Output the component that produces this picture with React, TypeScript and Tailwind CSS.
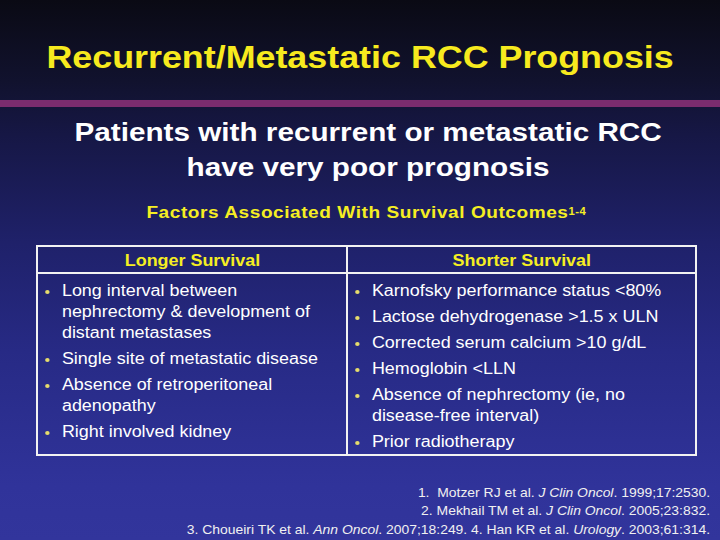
import React from "react";

const Bullet = ({ children }: { children: React.ReactNode }) => (
  <li className="flex">
    <span className="w-[16px] shrink-0 flex items-start pt-[10px] pl-[1px]">
      <span className="block w-[3.5px] h-[4px] rounded-full bg-[#e6dc6c]" />
    </span>
    <span>{children}</span>
  </li>
);

export default function App() {
  return (
    <div
      className="w-[720px] h-[540px] overflow-hidden flex flex-col text-white"
      style={{
        fontFamily: '"Liberation Sans", Arial, sans-serif',
        background:
          "linear-gradient(to bottom, #0a0a14 0%, #11122e 15%, #161745 25%, #1f216a 45%, #272a85 65%, #30339a 90%, #32359c 100%)",
      }}
    >
      <div className="h-[100px] pt-[41px] text-center">
        <h1 className="inline-block scale-x-[1.12] origin-center text-[#f7ea1e] text-[32px] font-bold leading-[32px]">
          Recurrent/Metastatic RCC Prognosis
        </h1>
      </div>
      <div className="h-[7px] bg-[#7b2c6e]" />
      <div className="pt-[8px] text-center text-[26.5px] font-bold leading-[35px] pl-[16px]">
        <div><span className="inline-block scale-x-[1.12] origin-center">Patients with recurrent or metastatic RCC</span></div>
        <div><span className="inline-block scale-x-[1.12] origin-center">have very poor prognosis</span></div>
      </div>
      <div className="mt-[18px] text-center text-[#f5ee22] text-[17px] font-bold pl-[13px] leading-[20px] h-[20px]">
        <span className="inline-block scale-x-[1.12] origin-center tracking-[0.5px]">
          Factors Associated With Survival Outcomes<sup className="text-[10px] relative top-[-3px]">1-4</sup>
        </span>
      </div>
      <div className="mt-[22px] ml-[36px] w-[661px] border-2 border-[#f2f2f2] flex">
        <div className="w-[310px] border-r-2 border-[#f2f2f2] flex flex-col">
          <div className="h-[27px] pt-[2px] border-b-2 border-[#f2f2f2] text-[#f5ee22] font-bold text-[16px] flex items-center justify-center">
            <span className="inline-block scale-x-[1.12] origin-center">Longer Survival</span>
          </div>
          <div className="pl-[6px] pt-[6px] pb-[2px]">
            <ul className="w-[264px] scale-x-[1.12] origin-left text-[16px] leading-[21px] flex flex-col gap-[5px]">
              <Bullet>Long interval between nephrectomy &amp; development of distant metastases</Bullet>
              <Bullet>Single site of metastatic disease</Bullet>
              <Bullet>Absence of retroperitoneal adenopathy</Bullet>
              <Bullet>Right involved kidney</Bullet>
            </ul>
          </div>
        </div>
        <div className="flex-1 flex flex-col">
          <div className="h-[27px] pt-[2px] border-b-2 border-[#f2f2f2] text-[#f5ee22] font-bold text-[16px] flex items-center justify-center">
            <span className="inline-block scale-x-[1.12] origin-center">Shorter Survival</span>
          </div>
          <div className="pl-[6px] pt-[6px] pb-[2px]">
            <ul className="w-[300px] scale-x-[1.12] origin-left text-[16px] leading-[21px] flex flex-col gap-[5px]">
              <Bullet>Karnofsky performance status &lt;80%</Bullet>
              <Bullet>Lactose dehydrogenase &gt;1.5 x ULN</Bullet>
              <Bullet>Corrected serum calcium &gt;10 g/dL</Bullet>
              <Bullet>Hemoglobin &lt;LLN</Bullet>
              <Bullet>Absence of nephrectomy (ie, no disease-free interval)</Bullet>
              <Bullet>Prior radiotherapy</Bullet>
            </ul>
          </div>
        </div>
      </div>
      <div className="mt-auto pb-[1px] pr-[10px] text-right text-[13px] leading-[18.5px] text-[#f0f0f0]">
        <div><span className="inline-block scale-x-[1.07] origin-right">1.&nbsp; Motzer RJ et al. <i>J Clin Oncol</i>. 1999;17:2530.</span></div>
        <div><span className="inline-block scale-x-[1.07] origin-right">2. Mekhail TM et al. <i>J Clin Oncol</i>. 2005;23:832.</span></div>
        <div><span className="inline-block scale-x-[1.07] origin-right">3. Choueiri TK et al. <i>Ann Oncol</i>. 2007;18:249. 4. Han KR et al. <i>Urology</i>. 2003;61:314.</span></div>
      </div>
    </div>
  );
}
